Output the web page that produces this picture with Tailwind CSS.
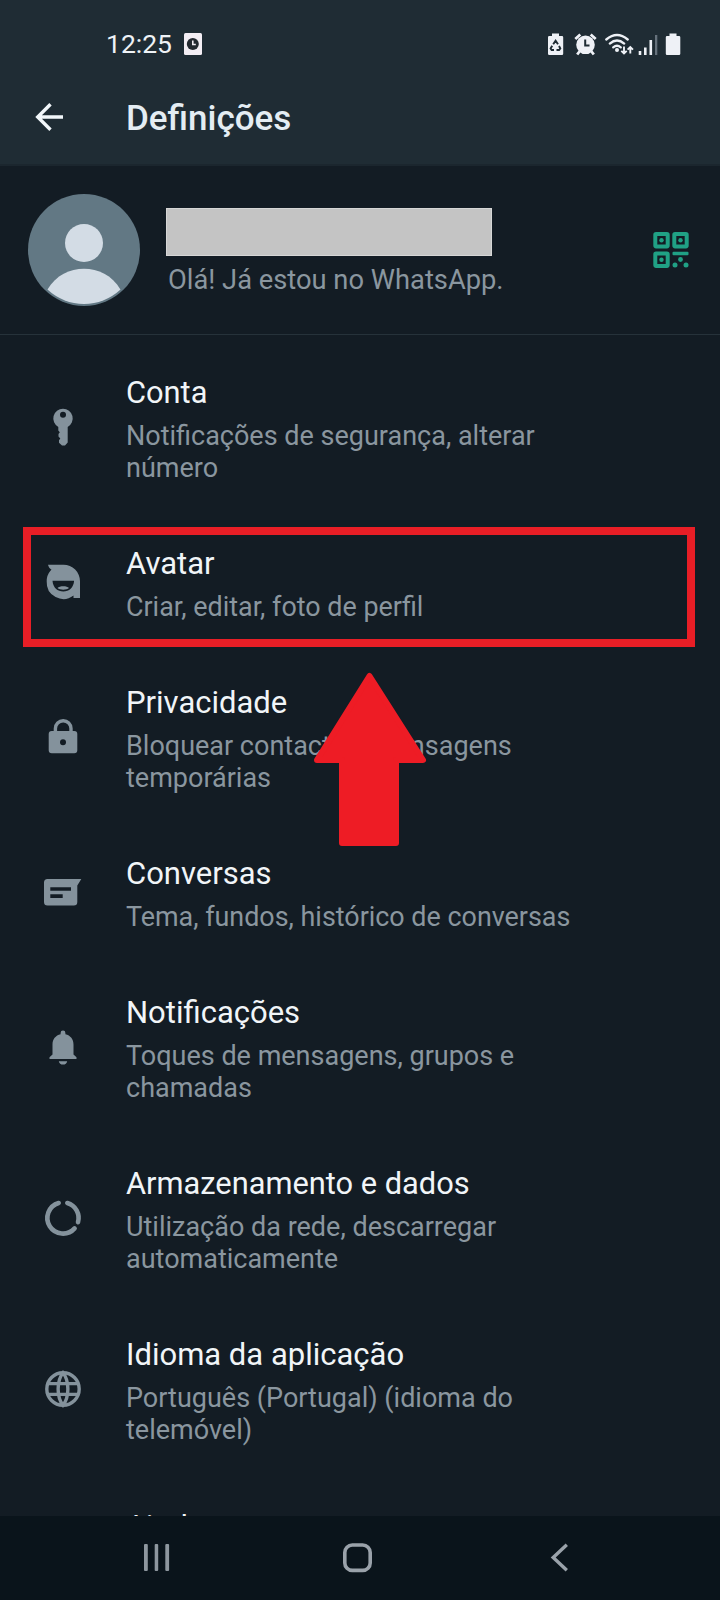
<!DOCTYPE html>
<html lang="pt">
<head>
<meta charset="utf-8">
<title>Definições</title>
<script src="https://cdn.jsdelivr.net/npm/@tailwindcss/browser@4"></script>
</head>
<body class="bg-[#131c24]">
<div class="relative flex h-[1600px] w-[720px] flex-col overflow-hidden bg-[#131c24] font-['Roboto',sans-serif] text-[#8a969f]">

  <header class="h-[166px] shrink-0 border-b-2 border-[#1b262e] bg-[#1f2c34]">
    <!-- Status bar -->
    <div class="flex h-[72px] items-end justify-between pr-[39px] pl-[106px] text-[#eef2f6]">
      <div class="flex items-center gap-[12px] pb-3">
        <span class="text-[26.5px] leading-8">12:25</span>
        <svg class="h-[22px] w-[18px]" viewBox="0 0 18 22"><rect width="18" height="22" rx="1.5" fill="#f3eef4"/><circle cx="8.8" cy="11" r="6" fill="#242a30"/><path d="M8.8 7.5V11.5H11.8" fill="none" stroke="#f3eef4" stroke-width="1.6"/></svg>
      </div>
      <svg class="mb-[13px] h-[30px] w-[134px]" viewBox="547 28 134 30" fill="#eef1f6">
        <path d="M552 32.5h7V35h3a1.2 1.2 0 0 1 1.200 1.200V52.800a1.200 1.200 0 0 1-1.200 1.200H549.200a1.200 1.200 0 0 1-1.200-1.200V36.200a1.200 1.200 0 0 1 1.200-1.200H552z"/>
        <g fill="none" stroke="#1f2c34" stroke-width="1.900"><path d="M553.200 43.200L555.600 39.600L558 43.200M559 45l1.300 2.500-1.200 1.500H556.500M554 49H551.600l-1-1.500 1.600-2.800"/></g>
        <circle cx="585.500" cy="43.800" r="9.300"/>
        <path d="M575.300 38l5-4.500M595.700 38l-5-4.500M579.500 50.500l-2.300 3M591.500 50.500l2.300 3" stroke="#eef1f6" stroke-width="2.800" fill="none"/>
        <path d="M585.200 38.500V44.600H589.500" stroke="#1f2c34" stroke-width="2" fill="none"/>
        <g fill="none" stroke="#eef1f6" stroke-width="2.300" stroke-linecap="round"><path d="M606.300 38.500Q617 29.500 627.700 38.500"/><path d="M609.800 42.600Q617 36.300 624.200 42.600"/><path d="M613.200 46.300Q617 43.300 620.800 46.300"/></g>
        <circle cx="617" cy="49" r="2"/>
        <path d="M624 45.500V52M621.300 49.800L624 52.500L626.700 49.800M630.300 52.500V46.500M627.600 48.700L630.300 46L633 48.700" fill="none" stroke="#eef1f6" stroke-width="1.900"/>
        <path d="M638.700 50h2.600v4h-2.600zM644 46.500h2.600V54H644zM649.500 39h2.600v15h-2.600z"/><path d="M655 34h2.300v20H655z" fill="#66727c"/>
        <path d="M669.500 32.500h7V35h2.600a1.200 1.200 0 0 1 1.200 1.200V52.800a1.200 1.200 0 0 1-1.200 1.200H667a1.200 1.200 0 0 1-1.200-1.200V36.200a1.200 1.200 0 0 1 1.200-1.200H669.500z"/>
      </svg>
    </div>
    <!-- Title bar -->
    <div class="flex h-[92px] items-center pl-[34px]">
      <svg class="mr-[62px] h-[30px] w-[30px] -translate-y-px" viewBox="0 0 30 30" fill="none" stroke="#f2f7fa" stroke-width="3.400"><path d="M29 15H3.500M16.500 2.200L3.700 15L16.500 27.800"/></svg>
      <h1 class="pt-0.5 text-[35px] leading-10 font-medium text-[#e4edf3]">Definições</h1>
    </div>
  </header>

  <!-- Profile -->
  <section class="flex h-[169px] shrink-0 items-center border-b border-[#26323a] pr-[31px] pl-7">
    <svg class="h-28 w-28" viewBox="0 0 112 112">
      <circle cx="56" cy="56" r="56" fill="#627884"/>
      <circle cx="56" cy="49" r="19" fill="#d3dce5"/>
      <path d="M19.500 95.500C28 81 42 74.700 56 74.700S84 81 92.500 95.500A53.500 53.500 0 0 1 19.500 95.500z" fill="#d3dce5"/>
    </svg>
    <div class="ml-[26px] grow pt-1">
      <div class="h-12 w-[326px] border border-[#d6d6d6] bg-[#c4c4c4]"></div>
      <p class="pt-2 pl-0.5 text-[27.3px] leading-8 whitespace-nowrap">Olá! Já estou no WhatsApp.</p>
    </div>
    <svg class="h-9 w-9" viewBox="0 0 36 36" fill="#20a185">
      <g fill="none" stroke="#20a185" stroke-width="4"><rect x="2.300" y="2" width="12.400" height="12.400" rx=".8"/><rect x="21.300" y="2" width="12.400" height="12.400" rx=".8"/><rect x="2.300" y="21.500" width="12.400" height="12.400" rx=".8"/></g>
      <circle cx="8.500" cy="8.200" r="2.200"/><circle cx="27.500" cy="8.200" r="2.200"/><circle cx="8.500" cy="27.700" r="2.200"/>
      <rect x="19.500" y="19.700" width="16" height="3.500" rx="1"/><circle cx="27.500" cy="27.500" r="2.400"/><circle cx="22" cy="33" r="2.500"/><circle cx="33" cy="33" r="2.500"/>
    </svg>
  </section>

  <!-- Settings list -->
  <main class="h-[1181px] shrink-0 overflow-hidden pt-2">
    <div class="flex h-[171px] items-center pl-[41px]">
      <svg class="mr-[41px] mb-[3px] h-11 w-11 shrink-0" viewBox="0 0 44 44" fill="#84929c"><path fill-rule="evenodd" d="M22 3.800a9.700 9.700 0 0 1 4.700 18.200V37.500L24 40.600H21L18 37.800V35.200L19.300 33.500L17.500 31.500V29L18.800 27.200L17.300 25.500V22A9.700 9.700 0 0 1 22 3.800zM22 6.800a3 3 0 1 0 0 6a3 3 0 0 0 0-6z"/></svg>
      <div><h2 class="text-[30.8px] leading-10 text-[#f1f5f8]">Conta</h2><p class="pt-[7px] text-[27px] leading-8 whitespace-nowrap">Notificações de segurança, alterar<br>número</p></div>
    </div>
    <div class="flex h-[139px] items-center pl-[41px]">
      <svg class="mr-[41px] mb-[5px] h-11 w-11 shrink-0" viewBox="0 0 44 44" fill="#84929c"><path fill-rule="evenodd" d="M7 5.700H22.500A16.500 16.500 0 0 1 39 22.200V39H32.500V36.600A16.700 16.700 0 0 1 5.700 22.500C5.700 17 7.600 13.700 10.500 10.800C8.800 9.600 7.500 8 7 5.700zM11.500 21.700C12 28.500 16.500 32.500 22.300 32.500S32.600 28.500 33.100 21.700zM16.500 29C18.500 26.600 26 26.600 28 29C25.500 31.300 19 31.300 16.500 29z"/></svg>
      <div><h2 class="text-[31px] leading-10 text-[#f1f5f8]">Avatar</h2><p class="pt-[7px] text-[26.9px] leading-8 whitespace-nowrap">Criar, editar, foto de perfil</p></div>
    </div>
    <div class="flex h-[171px] items-center pl-[41px]">
      <svg class="mr-[41px] mb-[3px] h-11 w-11 shrink-0" viewBox="0 0 44 44" fill="#84929c"><path d="M14.400 17V13.500a7.800 7.800 0 0 1 15.600 0V17" fill="none" stroke="#84929c" stroke-width="3.400"/><path fill-rule="evenodd" d="M10.700 16H33.300a3 3 0 0 1 3 3V35.300a3 3 0 0 1-3 3H10.700a3 3 0 0 1-3-3V19a3 3 0 0 1 3-3zM22 24.200a3 3 0 1 0 0 6a3 3 0 0 0 0-6z"/></svg>
      <div><h2 class="text-[31px] leading-10 text-[#f1f5f8]">Privacidade</h2><p class="pt-[7px] text-[27px] leading-8 whitespace-nowrap">Bloquear contactos, mensagens<br>temporárias</p></div>
    </div>
    <div class="flex h-[139px] items-center pl-[41px]">
      <svg class="mr-[41px] mb-[3px] h-11 w-11 shrink-0" viewBox="0 0 44 44" fill="#84929c"><path fill-rule="evenodd" d="M6.500 9H40.300L36.300 15.500V32a3.500 3.500 0 0 1-3.500 3.500H6.500A3.500 3.500 0 0 1 3 32V12.500A3.500 3.500 0 0 1 6.500 9zM9.300 17.200V20.800H30V17.200zM9.300 24.300V27.900H21.700V24.300z"/></svg>
      <div><h2 class="text-[31px] leading-10 text-[#f1f5f8]">Conversas</h2><p class="pt-[7px] text-[26.9px] leading-8 whitespace-nowrap">Tema, fundos, histórico de conversas</p></div>
    </div>
    <div class="flex h-[171px] items-center pl-[41px]">
      <svg class="mr-[41px] mb-[3px] h-11 w-11 shrink-0" viewBox="0 0 44 44" fill="#84929c"><path d="M22 5.500a2.400 2.400 0 0 1 2.400 2.400V9.300C29.500 10.500 32.500 14.300 32.500 19.500V29.500L35.500 32.300V34H8.500V32.300L11.500 29.500V19.500C11.500 14.300 14.500 10.500 19.600 9.300V7.900A2.400 2.400 0 0 1 22 5.500zM17.800 36.200H26.200A4.300 4.300 0 0 1 17.800 36.200z"/></svg>
      <div><h2 class="text-[31px] leading-10 text-[#f1f5f8]">Notificações</h2><p class="pt-[7px] text-[27px] leading-8 whitespace-nowrap">Toques de mensagens, grupos e<br>chamadas</p></div>
    </div>
    <div class="flex h-[171px] items-center pl-[41px]">
      <svg class="mr-[41px] mb-[3px] h-11 w-11 shrink-0" viewBox="0 0 44 44" fill="none" stroke="#84929c" stroke-width="4.600" stroke-linecap="round"><path d="M26.300 7A15.600 15.600 0 0 1 37 26.200M33.600 32.400A15.600 15.600 0 1 1 17.700 7"/></svg>
      <div><h2 class="text-[30.8px] leading-10 text-[#f1f5f8]">Armazenamento e dados</h2><p class="pt-[7px] text-[27px] leading-8 whitespace-nowrap">Utilização da rede, descarregar<br>automaticamente</p></div>
    </div>
    <div class="flex h-[171px] items-center pl-[41px]">
      <svg class="mr-[41px] mb-[3px] h-11 w-11 shrink-0" viewBox="0 0 44 44" fill="none" stroke="#84929c" stroke-width="3.400"><circle cx="22" cy="22" r="16.200"/><path d="M22 5.800C15.500 14 15.500 30 22 38.200C28.500 30 28.500 14 22 5.800zM7 16.600H37M7 27.400H37"/></svg>
      <div><h2 class="text-[31px] leading-10 text-[#f1f5f8]">Idioma da aplicação</h2><p class="pt-[7px] text-[27px] leading-8 whitespace-nowrap">Português (Portugal) (idioma do<br>telemóvel)</p></div>
    </div>
    <div class="pt-[31px] pl-[126px]"><h2 class="text-[30.8px] leading-10 text-[#f1f5f8]">Ajuda</h2></div>
  </main>

  <!-- System navigation -->
  <nav class="flex grow items-center bg-[#0a141b] pl-[143px]">
    <svg class="h-[30px] w-[28px]" viewBox="143 1543 28 30" fill="#8e979f"><rect x="144" y="1544" width="3.800" height="27" rx="1"/><rect x="154.700" y="1544" width="3.500" height="27" rx="1"/><rect x="165.300" y="1544" width="3.800" height="27" rx="1"/></svg>
    <svg class="ml-[171px] h-[30px] w-[32px]" viewBox="342 1543 32 30" fill="none" stroke="#9aa2aa" stroke-width="3.600"><rect x="344.800" y="1545" width="25.400" height="25.400" rx="7.500"/></svg>
    <svg class="ml-[176px] h-[30px] w-[20px]" viewBox="550 1543 20 30" fill="none" stroke="#9aa2aa" stroke-width="3.400"><path d="M566.800 1544.800L553.200 1557.500L566.800 1570.200"/></svg>
  </nav>

  <!-- Callout over the Avatar entry -->
  <div class="absolute top-[527px] left-[23px] h-[120px] w-[672px] border-8 border-[#e81e26]"></div>
  <svg class="absolute top-[672px] left-[313px] h-[175px] w-[114px]" viewBox="313 672 114 175" fill="#ee1c25" stroke="#ee1c25" stroke-width="6" stroke-linejoin="round"><path d="M369.500 676L423 760H396V843H342V760H317z"/></svg>
</div>
</body>
</html>
